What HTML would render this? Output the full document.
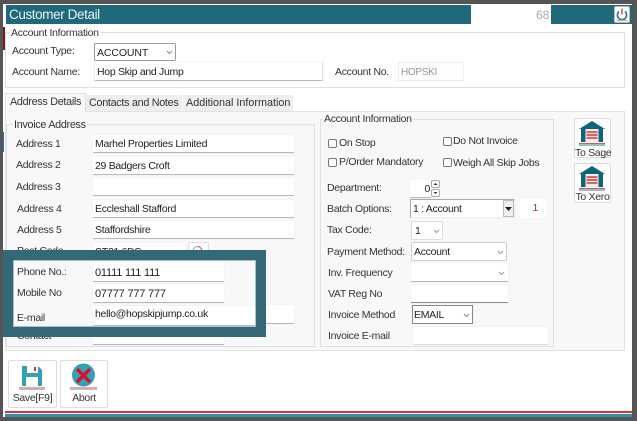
<!DOCTYPE html>
<html><head><meta charset="utf-8"><style>
html,body{margin:0;padding:0;background:#fff}
#p{position:relative;width:637px;height:421px;overflow:hidden;background:#fff;font-family:"Liberation Sans",sans-serif;font-size:10.5px;letter-spacing:-.3px;color:#333}
#p div{position:absolute;box-sizing:border-box;white-space:nowrap}
.t{line-height:14px}
.f{background:#fff;border-bottom:1px solid #b8b8b8;box-shadow:0 0 1px #e4e4e4;line-height:15px;padding:2px 0 0 2px;color:#222}
.g{border:1px solid #e0e0e0}
.b{background:#fff;border:1px solid #ddd;border-radius:2px;text-align:center;color:#333}
.c{width:9px;height:9px;border:1px solid #777;border-radius:2px;background:#fff}
svg{position:absolute}
</style></head><body><div id="p">
<div style="left:0;top:0;width:637px;height:4px;background:#555"></div>
<div style="left:0;top:0;width:3px;height:421px;background:#555"></div>
<div style="left:632px;top:0;width:5px;height:421px;background:#555"></div>
<div style="left:0;top:417px;width:637px;height:4px;background:#555"></div>
<div style="left:3px;top:27px;width:2px;height:23px;background:#7a1a1a"></div>
<div style="left:3px;top:132px;width:1px;height:20px;background:#1b6fc0"></div>

<div style="left:6px;top:5px;width:465px;height:19px;background:#20697a"></div>
<div style="left:471px;top:5px;width:80px;height:19px;background:#fff"></div>
<div style="left:551px;top:5px;width:81px;height:19px;background:#20697a"></div>
<div class="t" style="left:9px;top:7px;color:#e8f2f4;font-size:13.500px;line-height:16px;letter-spacing:-.4px">Customer Detail</div>
<div class="t" style="left:536px;top:8px;color:#aaa;font-size:12px;letter-spacing:0">68</div>
<div style="left:614px;top:6px;width:16px;height:17px;background:#fff;border:1px solid #bbb;border-radius:2px"></div>
<svg style="left:614px;top:6px" width="16" height="17" viewBox="0 0 16 17"><path d="M5 5.500a4.600 4.600 0 1 0 6 0" fill="none" stroke="#20798c" stroke-width="1.600"/><path d="M8 2.500v6" stroke="#d33" stroke-width="1.300"/><path d="M2.500 14.500h11" stroke="#e99" stroke-width="1.400"/></svg>

<div class="g" style="left:5px;top:32px;width:620px;height:56px"></div>
<div class="t" style="left:10px;top:26px;background:#fff;padding:0 1px">Account Information</div>
<div class="t" style="left:12px;top:44px">Account Type:</div>
<div class="b" style="left:94px;top:43px;width:82px;height:18px;border-color:#999;text-align:left;padding-left:2px;line-height:18px;color:#222;letter-spacing:-.1px">ACCOUNT</div>
<svg style="left:166px;top:50px" width="7" height="5"><path d="M1 1l2.500 2.500L6 1" fill="none" stroke="#888"/></svg>
<div class="t" style="left:12px;top:65px">Account Name:</div>
<div class="f" style="left:94px;top:62px;width:229px;height:19px;padding-top:3px;border-left:1px solid #eee;border-right:1px solid #ddd">Hop Skip and Jump</div>
<div class="t" style="left:335px;top:65px">Account No.</div>
<div class="g" style="left:398px;top:62px;width:66px;height:19px;background:#fdfdfd;color:#999;padding:2px 0 0 2px;font-size:10px;line-height:15px;border-color:#eee">HOPSKI</div>

<div style="left:5px;top:111px;width:620px;height:240px;background:#f8f8f8;border:1px solid #e2e2e2"></div>
<div style="left:5px;top:93px;width:81px;height:19px;background:#f8f8f8;border:1px solid #e2e2e2;border-bottom:none"></div>
<div style="left:86px;top:95px;width:96px;height:16px;background:#eee"></div>
<div style="left:183px;top:95px;width:110px;height:16px;background:#eee"></div>
<div class="t" style="left:10px;top:95px;font-size:10.800px">Address Details</div>
<div class="t" style="left:89px;top:96px;font-size:10.800px">Contacts and Notes</div>
<div class="t" style="left:186px;top:96px;font-size:10.800px;letter-spacing:0">Additional Information</div>

<div class="g" style="left:6px;top:124px;width:309px;height:223px"></div>
<div class="t" style="left:13px;top:118px;background:#f8f8f8;padding:0 1px;font-size:10.800px">Invoice Address</div>
<div class="t" style="left:16px;top:137px">Address 1</div>
<div class="f" style="left:93px;top:135px;width:201px;height:18px">Marhel Properties Limited</div>
<div class="t" style="left:16px;top:158px">Address 2</div>
<div class="f" style="left:93px;top:157px;width:201px;height:18px">29 Badgers Croft</div>
<div class="t" style="left:16px;top:180px">Address 3</div>
<div class="f" style="left:93px;top:178px;width:201px;height:18px"></div>
<div class="t" style="left:17px;top:202px">Address 4</div>
<div class="f" style="left:93px;top:200px;width:201px;height:18px">Eccleshall Stafford</div>
<div class="t" style="left:17px;top:223px">Address 5</div>
<div class="f" style="left:93px;top:221px;width:201px;height:18px">Staffordshire</div>
<div class="t" style="left:17px;top:244px">Post Code</div>
<div class="f" style="left:93px;top:243px;width:92px;height:18px">ST21 6DS</div>
<div class="b" style="left:188px;top:242px;width:21px;height:20px"></div>
<svg style="left:190px;top:243px" width="16" height="14"><circle cx="7.500" cy="8" r="4.500" fill="none" stroke="#8fb8c4" stroke-width="1.300"/><path d="M8 3.500a4.500 4.500 0 0 1 3.500 3" fill="none" stroke="#e66" stroke-width="1.300"/></svg>
<div class="t" style="left:17px;top:329px">Contact</div>
<div class="f" style="left:93px;top:326px;width:131px;height:19px"></div>
<div class="f" style="left:93px;top:305px;width:201px;height:19px"></div>

<div style="left:3px;top:250px;width:263px;height:87px;background:#f8f8f8;border:10px solid #336876"></div>
<div style="left:13px;top:260px;width:243px;height:67px;border:1px solid #a9c0c6"></div>
<div class="t" style="left:17px;top:265px">Phone No.:</div>
<div class="f" style="left:93px;top:263px;width:131px;height:19px;padding-top:3px;font-size:11px;letter-spacing:-.2px">01111 111 111</div>
<div class="t" style="left:17px;top:286px">Mobile No</div>
<div class="f" style="left:93px;top:284px;width:131px;height:19px;padding-top:3px;font-size:11px;letter-spacing:-.2px">07777 777 777</div>
<div class="t" style="left:17px;top:311px">E-mail</div>
<div class="f" style="left:93px;top:306px;width:162px;height:20px;padding-top:1px">hello@hopskipjump.co.uk</div>

<div class="g" style="left:320px;top:119px;width:234px;height:228px"></div>
<div class="t" style="left:323px;top:112px;background:#f8f8f8;padding:0 1px">Account Information</div>
<div class="c" style="left:328px;top:139px"></div><div class="t" style="left:339px;top:136px">On Stop</div>
<div class="c" style="left:443px;top:137px"></div><div class="t" style="left:453px;top:134px">Do Not Invoice</div>
<div class="c" style="left:328px;top:158px"></div><div class="t" style="left:339px;top:155px">P/Order Mandatory</div>
<div class="c" style="left:443px;top:158px"></div><div class="t" style="left:453px;top:156px">Weigh All Skip Jobs</div>
<div class="t" style="left:327px;top:181px">Department:</div>
<div class="f" style="left:410px;top:180px;width:21px;height:18px;text-align:right;padding-right:1px">0</div>
<div class="b" style="left:431px;top:180px;width:9px;height:8px;border-color:#aaa"></div>
<div class="b" style="left:431px;top:189px;width:9px;height:8px;border-color:#aaa"></div>
<svg style="left:431px;top:180px" width="9" height="18"><path d="M2.500 5l2-2 2 2zM2.500 12l2 2 2-2z" fill="#333"/></svg>
<div class="t" style="left:327px;top:202px">Batch Options:</div>
<div class="f" style="left:410px;top:199px;width:105px;height:19px;border:1px solid #bbb;border-color:#aaa #eee #eee #aaa;padding-top:2px">1 : Account</div>
<div style="left:503px;top:200px;width:11px;height:17px;background:#eee;border:1px solid #bbb"></div>
<svg style="left:504px;top:207px" width="9" height="5"><path d="M1 0h7L4.500 4z" fill="#222"/></svg>
<div style="left:520px;top:199px;width:26px;height:19px;background:#fff;text-align:right;padding-right:8px;line-height:19px;color:#a33">1</div>
<div class="t" style="left:327px;top:223px">Tax Code:</div>
<div class="b" style="left:411px;top:221px;width:32px;height:19px;text-align:left;padding-left:3px;line-height:18px;color:#222">1</div>
<svg style="left:433px;top:229px" width="7" height="5"><path d="M1 1l2.500 2.500L6 1" fill="none" stroke="#999"/></svg>
<div class="t" style="left:327px;top:245px">Payment Method:</div>
<div class="b" style="left:411px;top:242px;width:96px;height:19px;text-align:left;padding-left:2px;line-height:19px;color:#222;border-color:#ccc">Account</div>
<svg style="left:497px;top:250px" width="7" height="5"><path d="M1 1l2.500 2.500L6 1" fill="none" stroke="#999"/></svg>
<div class="t" style="left:328px;top:266px">Inv. Frequency</div>
<div class="f" style="left:411px;top:263px;width:97px;height:19px"></div>
<svg style="left:498px;top:271px" width="7" height="5"><path d="M1 1l2.500 2.500L6 1" fill="none" stroke="#999"/></svg>
<div class="t" style="left:328px;top:287px">VAT Reg No</div>
<div class="f" style="left:411px;top:285px;width:97px;height:18px;border-bottom-color:#888"></div>
<div class="t" style="left:328px;top:308px">Invoice Method</div>
<div class="b" style="left:412px;top:305px;width:61px;height:19px;border-color:#888;border-radius:0;text-align:left;padding-left:1px;line-height:18px;color:#222">EMAIL</div>
<svg style="left:463px;top:313px" width="7" height="5"><path d="M1 1l2.500 2.500L6 1" fill="none" stroke="#888"/></svg>
<div class="t" style="left:328px;top:329px">Invoice E-mail</div>
<div class="f" style="left:413px;top:327px;width:135px;height:18px;border-bottom-color:#ddd"></div>

<div class="b" style="left:574px;top:118px;width:37px;height:40px;line-height:12px;padding-top:28px;font-size:10.500px">To Sage</div>
<div class="b" style="left:574px;top:163px;width:37px;height:40px;line-height:12px;padding-top:27px;font-size:10.500px">To Xero</div>
<svg style="left:578px;top:120px" width="30" height="26" viewBox="0 0 30 26"><path d="M14 1L27 9h-2v13H3V9H1z" fill="#0f6478"/><rect x="7.500" y="9" width="13" height="13" fill="#eee"/><path d="M8.500 12h11M8.500 15h11M8.500 18h11" stroke="#d33" stroke-width="1.600"/><path d="M1 23.500h26" stroke="#d55" stroke-width="1"/><path d="M1 25h26" stroke="#2a7f90" stroke-width="1"/></svg>
<svg style="left:578px;top:165px" width="30" height="26" viewBox="0 0 30 26"><path d="M14 1L27 9h-2v13H3V9H1z" fill="#0f6478"/><rect x="7.500" y="9" width="13" height="13" fill="#eee"/><path d="M8.500 12h11M8.500 15h11M8.500 18h11" stroke="#d33" stroke-width="1.600"/><path d="M1 23.500h26" stroke="#d55" stroke-width="1"/><path d="M1 25h26" stroke="#2a7f90" stroke-width="1"/></svg>

<div class="b" style="left:8px;top:360px;width:49px;height:48px;line-height:12px;padding-top:31px">Save[F9]</div>
<div class="b" style="left:60px;top:360px;width:48px;height:48px;line-height:12px;padding-top:31px">Abort</div>
<svg style="left:8px;top:360px" width="49" height="32" viewBox="0 0 49 32"><path d="M14 6h16l4 4v16H14z" fill="#33a0b4"/><rect x="19" y="6" width="11" height="7" fill="#fff"/><rect x="26" y="7" width="2" height="4" fill="#d33"/><rect x="18" y="17" width="12" height="9" fill="#fff"/><path d="M11 28h26" stroke="#f08080" stroke-width="1.500"/><path d="M11 29.500h26" stroke="#9cc" stroke-width="1"/></svg>
<svg style="left:60px;top:360px" width="48" height="32" viewBox="0 0 48 32"><circle cx="23.500" cy="15" r="11.500" fill="#33a0b4"/><path d="M17 9l13 13M30 9L17 22" stroke="#d8102c" stroke-width="3.500"/><path d="M10 28h27" stroke="#f08080" stroke-width="1.500"/><path d="M10 29.500h27" stroke="#9cc" stroke-width="1"/></svg>

<div style="left:5px;top:411px;width:627px;height:2px;background:#e03040"></div>
<div style="left:5px;top:413px;width:627px;height:1px;background:#eee"></div>
<div style="left:5px;top:414px;width:627px;height:3px;background:#2a93a5"></div>
</div></body></html>
